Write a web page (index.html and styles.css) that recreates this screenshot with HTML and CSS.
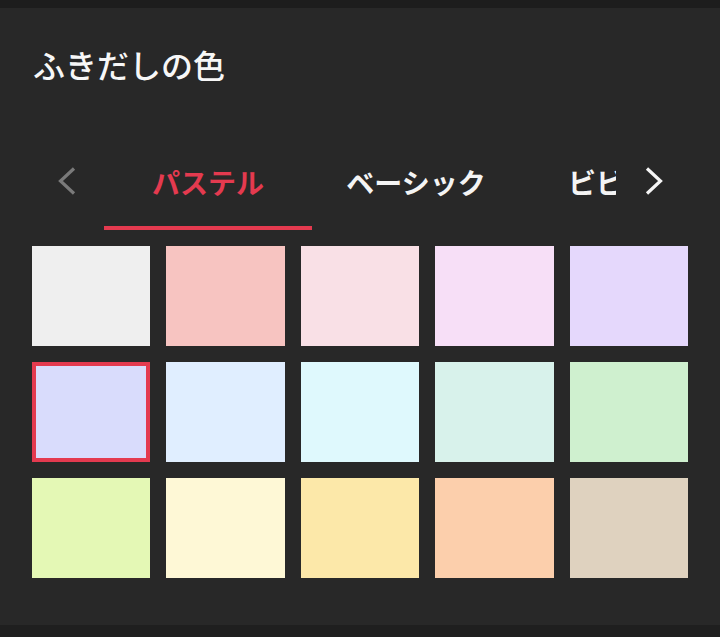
FILE: index.html
```html
<!DOCTYPE html>
<html lang="ja">
<head>
<meta charset="utf-8">
<title>ふきだしの色</title>
<link rel="stylesheet" href="styles.css">
</head>
<body>
<div class="top-bar"></div>
<main class="panel">
  <h1 class="title">ふきだしの色</h1>
  <div class="tabs">
    <button class="arrow arrow-left" aria-label="前へ">
      <svg width="18" height="28" viewBox="0 0 18 28"><polyline points="16,1.5 2.5,14 16,26.5" fill="none" stroke="currentColor" stroke-width="3.2"/></svg>
    </button>
    <div class="tab-viewport">
      <div class="tab-strip">
        <div class="tab active">パステル</div>
        <div class="tab">ベーシック</div>
        <div class="tab">ビビッド</div>
      </div>
    </div>
    <button class="arrow arrow-right" aria-label="次へ">
      <svg width="18" height="28" viewBox="0 0 18 28"><polyline points="2,1.5 15.5,14 2,26.5" fill="none" stroke="currentColor" stroke-width="3.2"/></svg>
    </button>
  </div>
  <div class="swatches">
    <div class="swatch c1"></div>
    <div class="swatch c2"></div>
    <div class="swatch c3"></div>
    <div class="swatch c4"></div>
    <div class="swatch c5"></div>
    <div class="swatch c6 selected"></div>
    <div class="swatch c7"></div>
    <div class="swatch c8"></div>
    <div class="swatch c9"></div>
    <div class="swatch c10"></div>
    <div class="swatch c11"></div>
    <div class="swatch c12"></div>
    <div class="swatch c13"></div>
    <div class="swatch c14"></div>
    <div class="swatch c15"></div>
  </div>
</main>
<div class="bottom-bar"></div>
</body>
</html>
```
FILE: styles.css
```css
html, body {
  margin: 0;
  padding: 0;
}
body {
  width: 720px;
  height: 637px;
  overflow: hidden;
  background: #1e1e1e;
  font-family: "Noto Sans CJK JP", "Noto Sans", sans-serif;
  display: flex;
  flex-direction: column;
}
.top-bar {
  height: 8px;
  background: #1d1d1d;
  flex: none;
}
.panel {
  height: 617px;
  flex: none;
  box-sizing: border-box;
  background: #282828;
  padding: 32px 32px 0;
}
.bottom-bar {
  flex: 1;
  background: #1f1f1f;
}
.title {
  margin: 0;
  font-size: 32px;
  line-height: 48px;
  font-weight: 500;
  color: #f7f7f7;
  padding-left: 1px;
}
.tabs {
  margin-top: 46px;
  display: flex;
  height: 96px;
}
.arrow {
  width: 72px;
  flex: none;
  border: 0;
  background: none;
  margin: 0;
  padding: 0;
  display: flex;
  align-items: center;
  padding-bottom: 2px;
  box-sizing: border-box;
}
.arrow svg {
  display: block;
}
.arrow-left {
  color: #7a7a7a;
  padding-left: 26px;
}
.arrow-right {
  color: #f5f5f5;
  padding-left: 29px;
}
.tab-viewport {
  width: 512px;
  flex: none;
  overflow: hidden;
}
.tab-strip {
  display: flex;
  height: 100%;
}
.tab {
  width: 208px;
  flex: none;
  box-sizing: border-box;
  height: 96px;
  padding-top: 4px;
  border-bottom: 4px solid transparent;
  display: flex;
  align-items: center;
  justify-content: center;
  font-size: 28px;
  font-weight: 700;
  color: #f4f4f4;
  white-space: nowrap;
}
.tab.active {
  color: #e43a4f;
  border-bottom-color: #e43a4f;
}
.swatches {
  margin-top: 16px;
  display: grid;
  grid-template-columns: repeat(5, 1fr);
  grid-auto-rows: 100px;
  gap: 16px;
}
.swatch {
  box-sizing: border-box;
}
.swatch.selected {
  border: 4px solid #e43a4f;
}
.c1 { background: #efefef; }
.c2 { background: #f7c4c1; }
.c3 { background: #f9e0e6; }
.c4 { background: #f7dff7; }
.c5 { background: #e5d8fc; }
.c6 { background: #d9dcfc; }
.c7 { background: #e0eeff; }
.c8 { background: #dff9fd; }
.c9 { background: #d8f2eb; }
.c10 { background: #cff0cf; }
.c11 { background: #e4f8b5; }
.c12 { background: #fef8d6; }
.c13 { background: #fce8a9; }
.c14 { background: #fccfac; }
.c15 { background: #dfd2bf; }
```
